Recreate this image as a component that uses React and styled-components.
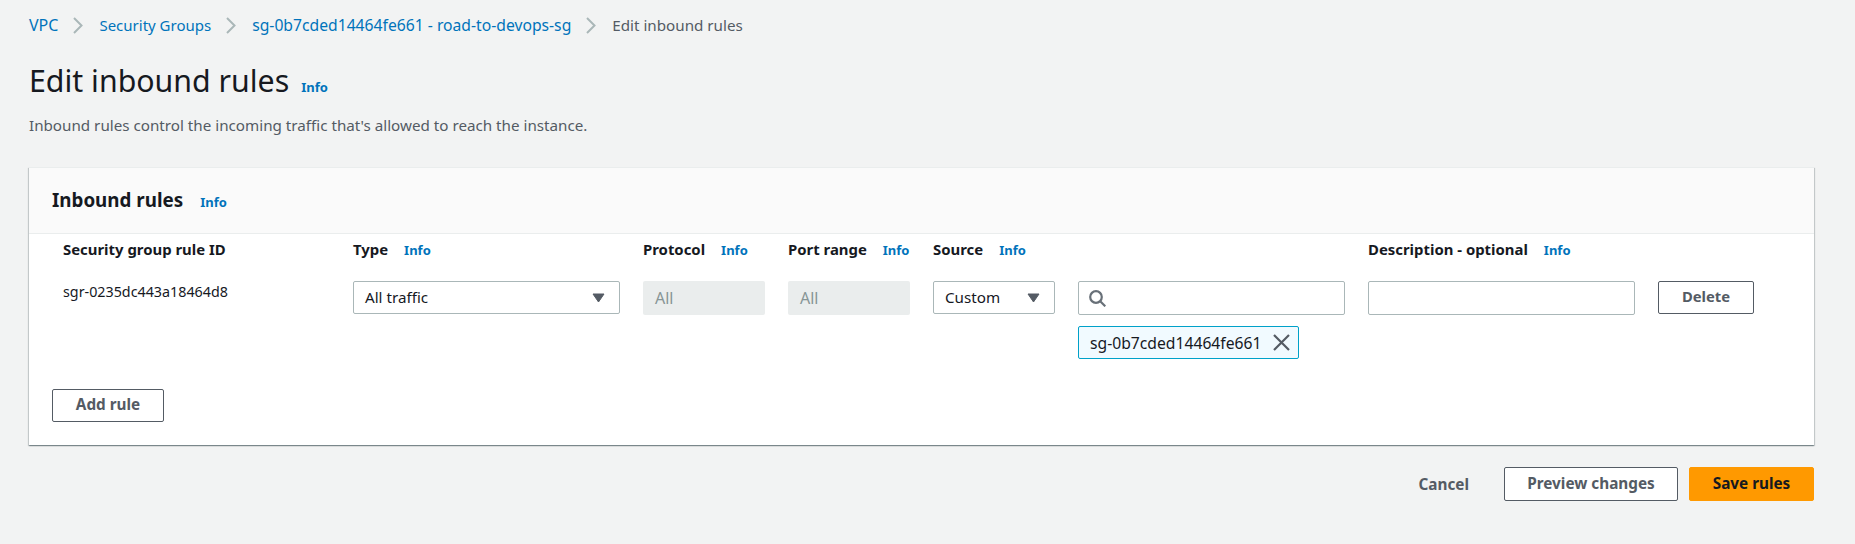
import React from "react";
import styled, { createGlobalStyle } from "styled-components";

const Global = createGlobalStyle`
  html, body { margin: 0; padding: 0; background: #f2f3f3; }
  body { font-family: "Noto Sans", "Open Sans", sans-serif; font-size: 15.2px; color: #16191f; }
  * { box-sizing: border-box; }
`;

const Page = styled.div`
  width: 1855px;
  height: 544px;
  padding: 14px 41px 0 29px;
  overflow: hidden;
`;

const Crumbs = styled.nav`
  display: flex;
  align-items: center;
  height: 22px;
`;
const CrumbLink = styled.a`
  color: #0073bb;
  font-size: ${(p) => p.$size}px;
`;
const CrumbCurrent = styled.span`
  color: #545b64;
  font-size: 15.2px;
`;
const CrumbSep = styled.svg`
  width: 10px;
  height: 17px;
  margin: 0 16px 0 15px;
  fill: none;
  stroke: #aab7b8;
  stroke-width: 2;
`;

const TitleRow = styled.div`
  display: flex;
  align-items: baseline;
  margin-top: 27px;
  gap: 12px;
`;
const Title = styled.h1`
  margin: 0;
  font-size: 30.3px;
  line-height: 36px;
  font-weight: 400;
`;
const Info = styled.a`
  color: #0073bb;
  font-size: 13px;
  font-weight: 700;
`;
const Lead = styled.p`
  margin: 15px 0 0;
  font-size: 15.2px;
  line-height: 22px;
  color: #545b64;
`;

const Card = styled.section`
  margin-top: 31px;
  background: #fff;
  height: 278px;
  box-shadow: 0 1px 1px 0 rgba(0, 28, 36, 0.3), 1px 1px 1px 0 rgba(0, 28, 36, 0.15), -1px 1px 1px 0 rgba(0, 28, 36, 0.15);
  border-top: 1px solid #eaeded;
  display: flex;
  flex-direction: column;
`;
const CardHeader = styled.header`
  height: 66px;
  background: #fafafa;
  border-bottom: 1px solid #eaeded;
  padding: 19px 23px 0;
  display: flex;
  align-items: baseline;
  gap: 17px;
`;
const CardTitle = styled.h2`
  margin: 0;
  font-size: 18.8px;
  line-height: 26px;
  font-weight: 700;
`;
const CardBody = styled.div`
  padding: 0 23px;
`;
const Grid = styled.div`
  display: grid;
  grid-template-columns: 267px 267px 122px 122px 122px 267px 267px 96px;
  column-gap: 23px;
  padding-left: 11px;
  row-gap: 21px;
  padding-top: 4px;
`;
const Head = styled.div`
  display: flex;
  align-items: baseline;
  height: 22px;
  line-height: 22px;
  gap: 16px;
  font-weight: 700;
  font-size: 14.9px;
`;
const IdCell = styled.div`
  font-size: 14.3px;
  line-height: 22px;
`;
const Cell = styled.div`
  display: flex;
  flex-direction: column;
  gap: 11px;
  align-items: flex-start;
`;
const Select = styled.div`
  width: 100%;
  height: 33px;
  background: #fff;
  border: 1px solid #aab7b8;
  border-radius: 2px;
  display: flex;
  align-items: center;
  justify-content: space-between;
  padding: 0 14px 2px 11px;
`;
const Caret = styled.svg`
  width: 13px;
  height: 10px;
  margin-top: 3px;
  fill: #545b64;
`;
const Disabled = styled.div`
  width: 100%;
  height: 34px;
  background: #eaeded;
  border-radius: 2px;
  color: #879596;
  font-size: 16px;
  padding: 0 12px;
  display: flex;
  align-items: center;
`;
const Input = styled.div`
  width: 100%;
  height: 34px;
  background: #fff;
  border: 1px solid #aab7b8;
  border-radius: 2px;
  display: flex;
  align-items: center;
  padding: 0 10px;
`;
const IconSvg = styled.svg`
  width: 17px;
  height: 17px;
  fill: none;
  stroke: ${(p) => p.$color};
  stroke-width: 2.2;
`;
const Token = styled.div`
  display: flex;
  align-items: center;
  gap: 11px;
  width: 221px;
  height: 33px;
  font-size: 15.7px;
  background: #f1faff;
  border: 1px solid #00a1c9;
  border-radius: 2px;
  padding: 0 8px 0 11px;
  white-space: nowrap;
`;
const Button = styled.button`
  font: inherit;
  font-weight: 700;
  font-size: ${(p) => p.$size || 15.3}px;
  height: ${(p) => p.$h}px;
  width: ${(p) => p.$w}px;
  background: ${(p) => (p.$primary ? "#ff9900" : "#fff")};
  color: ${(p) => (p.$primary ? "#16191f" : "#545b64")};
  border: 1px solid ${(p) => (p.$primary ? "#ff9900" : "#545b64")};
  border-radius: 2px;
  padding: 0 0 3px;
`;
const AddRow = styled.div`
  margin-top: 30px;
`;
const Footer = styled.footer`
  display: flex;
  justify-content: flex-end;
  align-items: center;
  margin-top: 22px;
  gap: 11px;
`;
const Cancel = styled.span`
  font-weight: 700;
  font-size: 15.3px;
  color: #545b64;
  margin-right: 24px;
`;

const Sep = () => (
  <CrumbSep viewBox="0 0 10 17"><path d="M1 1l7.5 7.5L1 16" /></CrumbSep>
);
const Down = () => (
  <Caret viewBox="0 0 13 10"><path d="M1 1h11L6.5 9z" stroke="#545b64" strokeLinejoin="round" /></Caret>
);

export default function App() {
  return (
    <Page>
      <Global />
      <Crumbs>
        <CrumbLink $size={16}>VPC</CrumbLink><Sep />
        <CrumbLink $size={15}>Security Groups</CrumbLink><Sep />
        <CrumbLink $size={15.7}>sg-0b7cded14464fe661 - road-to-devops-sg</CrumbLink><Sep />
        <CrumbCurrent>Edit inbound rules</CrumbCurrent>
      </Crumbs>
      <TitleRow><Title>Edit inbound rules</Title><Info>Info</Info></TitleRow>
      <Lead>Inbound rules control the incoming traffic that's allowed to reach the instance.</Lead>
      <Card>
        <CardHeader><CardTitle>Inbound rules</CardTitle><Info>Info</Info></CardHeader>
        <CardBody>
          <Grid>
            <Head>Security group rule ID</Head>
            <Head>Type <Info>Info</Info></Head>
            <Head>Protocol <Info>Info</Info></Head>
            <Head>Port range <Info>Info</Info></Head>
            <Head>Source <Info>Info</Info></Head>
            <Head />
            <Head>Description - optional <Info>Info</Info></Head>
            <Head />
            <IdCell>sgr-0235dc443a18464d8</IdCell>
            <Cell><Select>All traffic<Down /></Select></Cell>
            <Cell><Disabled>All</Disabled></Cell>
            <Cell><Disabled>All</Disabled></Cell>
            <Cell><Select>Custom<Down /></Select></Cell>
            <Cell>
              <Input>
                <IconSvg viewBox="0 0 17 17" $color="#687078"><circle cx="7" cy="7" r="5.8" /><path d="M11 11l5.3 5.3" /></IconSvg>
              </Input>
              <Token>
                sg-0b7cded14464fe661
                <IconSvg viewBox="0 0 17 17" $color="#545b64"><path d="M1 1l15 15M16 1L1 16" /></IconSvg>
              </Token>
            </Cell>
            <Cell><Input /></Cell>
            <Cell><Button $w={96} $h={33} $size={14.8}>Delete</Button></Cell>
          </Grid>
          <AddRow><Button $w={112} $h={33}>Add rule</Button></AddRow>
        </CardBody>
      </Card>
      <Footer>
        <Cancel>Cancel</Cancel>
        <Button $w={174} $h={34}>Preview changes</Button>
        <Button $w={125} $h={34} $primary>Save rules</Button>
      </Footer>
    </Page>
  );
}
